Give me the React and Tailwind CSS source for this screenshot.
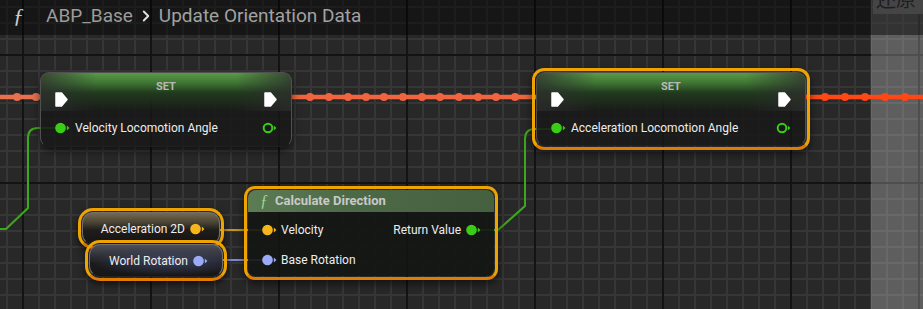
import React from 'react';
import { ChevronRight } from 'lucide-react';

const GREEN = '#3bcc15';
const YELLOW = '#f5b51b';
const BLUE = '#9aaaf6';

const ExecPin = () => (
  <svg width="13" height="15" viewBox="0 0 13 15">
    <path d="M1 1 H6.5 L12 7.5 L6.5 14 H1 Z" fill="#fff" stroke="#fff" strokeWidth="1.5" strokeLinejoin="round" />
  </svg>
);

const DataPin = ({ color, hollow }) => (
  <svg width="15" height="12" viewBox="0 0 15 12">
    {hollow ? (
      <circle cx="6" cy="6" r="4.3" fill="none" stroke={color} strokeWidth="2" />
    ) : (
      <circle cx="5.5" cy="6" r="5.3" fill={color} />
    )}
    <path d="M11.8 3.6 L14.4 6 L11.8 8.4 Z" fill={color} />
  </svg>
);

// SET variable node (green header, exec in/out, one value pin)
const SetNode = ({ className, label, selected }) => (
  <div
    className={`absolute ${className} rounded-[12px] shadow-[0_4px_8px_rgba(0,0,0,0.55)] ${
      selected ? 'border-[3px] border-[#eea300] border-b-[#e07c00] p-px' : ''
    }`}
  >
    <div className="relative h-full overflow-hidden rounded-[9px] border border-[#505050] border-b-[#202020] bg-[#161816]/85">
      <div className="absolute inset-x-0 top-0 h-[38px] bg-[linear-gradient(180deg,#5a9a47_0%,#3e7534_26%,#213a1e_52%,rgba(28,34,27,0)_100%)]" />
      <div className="absolute inset-x-0 top-0 h-[38px] bg-[linear-gradient(90deg,rgba(45,45,45,0.75)_0%,rgba(0,0,0,0)_22%,rgba(0,0,0,0)_78%,rgba(45,45,45,0.75)_100%)]" />
      <div className="relative flex flex-col px-[14px] pt-[9px]">
        <div className="h-[10px] text-center text-[11px] font-bold leading-[10px] text-[#b9b9b9]">SET</div>
        <div className="flex h-[14px] items-center justify-between">
          <ExecPin />
          <ExecPin />
        </div>
        <div className="mt-[12px] flex h-[20px] items-center justify-between">
          <div className="flex items-center gap-[5px]">
            <DataPin color={GREEN} />
            <span className="text-[12px] text-[#ededed]">{label}</span>
          </div>
          <DataPin color={GREEN} hollow />
        </div>
      </div>
    </div>
  </div>
);

// Pure getter node (pill shaped, selected)
const GetterNode = ({ className, label, color, gloss }) => (
  <div
    className={`absolute ${className} rounded-[15px] border-[3px] border-[#eea300] border-b-[#e07c00] p-px shadow-[0_3px_6px_rgba(0,0,0,0.6)]`}
  >
    <div className={`relative flex h-full items-center justify-end gap-[5px] overflow-hidden rounded-[11px] border border-[#707070] border-b-[#252525] pr-[14px] ${gloss}`}>
      <span className="text-[12px] text-[#ededed]">{label}</span>
      <DataPin color={color} />
    </div>
  </div>
);

const Wires = () => {
  const midBeads = [310, 329, 348, 366, 384, 403, 422, 440, 459, 478, 496, 515];
  const rightBeads = [825, 845, 865, 885, 905];
  return (
    <svg className="absolute inset-0" width="923" height="309" viewBox="0 0 923 309">
      <defs>
        <pattern id="minor" x="6" y="6" width="16" height="16" patternUnits="userSpaceOnUse">
          <rect width="16" height="16" fill="#282828" />
          <rect width="2" height="16" fill="#363636" />
          <rect width="16" height="2" fill="#363636" />
        </pattern>
        <pattern id="major" x="22" y="54" width="128" height="128" patternUnits="userSpaceOnUse">
          <rect width="2" height="128" fill="#131313" />
          <rect width="128" height="2" fill="#131313" />
        </pattern>
      </defs>
      <rect width="923" height="309" fill="url(#minor)" />
      <rect width="923" height="309" fill="url(#major)" />
      <rect x="871" y="0" width="52" height="309" fill="#fff" fillOpacity="0.25" />

      {/* exec wires */}
      <line x1="0" y1="97" x2="60" y2="97" stroke="#e8704f" strokeWidth="4.5" />
      {[17, 36].map((x) => (
        <circle key={x} cx={x} cy="97" r="4" fill="#e8704f" />
      ))}
      <line x1="272" y1="97" x2="556" y2="97" stroke="#f0643f" strokeWidth="4.5" />
      {midBeads.map((x) => (
        <circle key={x} cx={x} cy="97" r="4" fill="#f0643f" />
      ))}
      <line x1="788" y1="97" x2="923" y2="97" stroke="#ff4716" strokeWidth="4.5" />
      {rightBeads.map((x) => (
        <circle key={x} cx={x} cy="97" r="4" fill="#ff4716" />
      ))}

      {/* data wires */}
      <path d="M0 229 L6 229 L28 208 L28 138 Q28 128 38 128 L58 128" fill="none" stroke="#3ea81c" strokeWidth="2" />
      <path d="M476 230 L498 230 L525 206 L525 139 Q525 129 535 129 L555 129" fill="none" stroke="#3ea81c" strokeWidth="2" />
      <line x1="200" y1="230" x2="266" y2="230" stroke="#c8931e" strokeWidth="2" />
      <line x1="203" y1="260" x2="266" y2="260" stroke="#7e8bcf" strokeWidth="2" />
    </svg>
  );
};

export default function App() {
  return (
    <div className="relative h-[309px] w-[923px] overflow-hidden bg-[#282828] font-[Roboto,sans-serif]">
      <Wires />

      {/* graph nodes on the canvas */}
      <SetNode className="left-[40px] top-[72px] h-[75px] w-[252px]" label="Velocity Locomotion Angle" />
      <SetNode className="left-[532px] top-[68px] h-[82px] w-[278px]" label="Acceleration Locomotion Angle" selected />

      <div className="absolute left-[244px] top-[186px] h-[94px] w-[254px] rounded-[11px] border-[3px] border-[#eea300] border-b-[#e07c00] p-px shadow-[0_4px_8px_rgba(0,0,0,0.55)]">
        <div className="flex h-full flex-col overflow-hidden rounded-[8px] bg-[#131513]/90">
          <div className="flex h-[22px] items-center gap-[7px] bg-[linear-gradient(90deg,#5c7c55_0%,#4d6a47_40%,#45603f_100%)] pl-[12px]">
            <span className="font-['Liberation_Serif',serif] text-[16px] italic leading-none text-[#9fd88b]">ƒ</span>
            <span className="text-[13px] font-bold text-[#c9c9c9]">Calculate Direction</span>
          </div>
          <div className="mt-[3px] flex h-[30px] items-center justify-between pl-[14px] pr-[13px]">
            <div className="flex items-center gap-[4px]">
              <DataPin color={YELLOW} />
              <span className="text-[12px] text-[#ededed]">Velocity</span>
            </div>
            <div className="flex items-center gap-[5px]">
              <span className="text-[12px] text-[#ededed]">Return Value</span>
              <DataPin color={GREEN} />
            </div>
          </div>
          <div className="flex h-[30px] items-center gap-[4px] pl-[14px]">
            <DataPin color={BLUE} />
            <span className="text-[12px] text-[#ededed]">Base Rotation</span>
          </div>
        </div>
      </div>

      <GetterNode
        className="left-[78px] top-[208px] h-[41px] w-[146px]"
        label="Acceleration 2D"
        color={YELLOW}
        gloss="bg-[linear-gradient(180deg,#746a52_0%,#4a4434_30%,#1e1d1a_55%,#161616_100%)]"
      />
      <GetterNode
        className="left-[85px] top-[240px] h-[41px] w-[142px]"
        label="World Rotation"
        color={BLUE}
        gloss="bg-[radial-gradient(ellipse_60%_45%_at_60%_55%,rgba(80,90,140,0.55),rgba(0,0,0,0)),linear-gradient(180deg,#4d4f5a_0%,#33343b_30%,#1b1b1d_60%,#161616_100%)]"
      />

      {/* overlay chrome: breadcrumb header */}
      <div className="relative flex h-[35px] items-start bg-black/45">
        <div className="flex h-[32px] flex-1 items-center pl-[13px]">
          <span className="font-['Liberation_Serif',serif] text-[22px] italic leading-none text-[#cfcfcf]">ƒ</span>
          <span className="ml-[22px] text-[19px] text-[#9c9c9c]">ABP_Base</span>
          <ChevronRight size={18} strokeWidth={2.5} className="ml-[4px] text-[#e2e2e2]" />
          <span className="ml-[4px] text-[19px] text-[#a2a2a2]">Update Orientation Data</span>
        </div>
        <div className="ml-[2px] h-[14px] w-[50px] overflow-hidden bg-[#454545]">
          <div className="-mt-[13px] pl-[3px] font-['Noto_Sans_CJK_SC',sans-serif] text-[20px] leading-[24px] text-[#1e1e1e]">还原</div>
        </div>
      </div>
    </div>
  );
}
